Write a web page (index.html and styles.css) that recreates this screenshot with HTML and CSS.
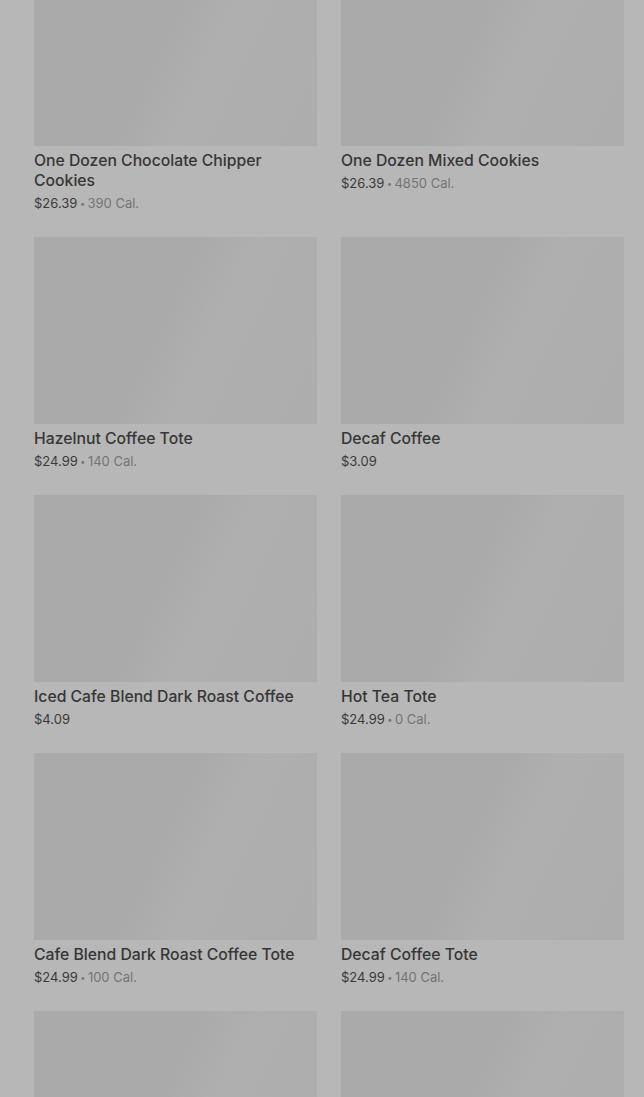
FILE: index.html
```html
<!DOCTYPE html>
<html lang="en">
<head>
<meta charset="utf-8">
<title>Menu</title>
<link rel="stylesheet" href="styles.css">
</head>
<body>
<main class="grid">
  <article class="card">
    <div class="thumb"></div>
    <h3 class="name">One Dozen Chocolate Chipper Cookies</h3>
    <p class="meta"><span class="price">$26.39</span><span class="cal"><span class="sep">•</span>390 Cal.</span></p>
  </article>
  <article class="card">
    <div class="thumb"></div>
    <h3 class="name">One Dozen Mixed Cookies</h3>
    <p class="meta"><span class="price">$26.39</span><span class="cal"><span class="sep">•</span>4850 Cal.</span></p>
  </article>
  <article class="card">
    <div class="thumb"></div>
    <h3 class="name">Hazelnut Coffee Tote</h3>
    <p class="meta"><span class="price">$24.99</span><span class="cal"><span class="sep">•</span>140 Cal.</span></p>
  </article>
  <article class="card">
    <div class="thumb"></div>
    <h3 class="name">Decaf Coffee</h3>
    <p class="meta"><span class="price">$3.09</span></p>
  </article>
  <article class="card">
    <div class="thumb"></div>
    <h3 class="name">Iced Cafe Blend Dark Roast Coffee</h3>
    <p class="meta"><span class="price">$4.09</span></p>
  </article>
  <article class="card">
    <div class="thumb"></div>
    <h3 class="name">Hot Tea Tote</h3>
    <p class="meta"><span class="price">$24.99</span><span class="cal"><span class="sep">•</span>0 Cal.</span></p>
  </article>
  <article class="card">
    <div class="thumb"></div>
    <h3 class="name">Cafe Blend Dark Roast Coffee Tote</h3>
    <p class="meta"><span class="price">$24.99</span><span class="cal"><span class="sep">•</span>100 Cal.</span></p>
  </article>
  <article class="card">
    <div class="thumb"></div>
    <h3 class="name">Decaf Coffee Tote</h3>
    <p class="meta"><span class="price">$24.99</span><span class="cal"><span class="sep">•</span>140 Cal.</span></p>
  </article>
  <article class="card">
    <div class="thumb"></div>
  </article>
  <article class="card">
    <div class="thumb"></div>
  </article>
</main>
</body>
</html>
```

FILE: styles.css
```css
html, body {
  margin: 0;
  padding: 0;
  background: #b7b7b7;
  overflow: hidden;
}

body {
  font-family: Inter, "Liberation Sans", sans-serif;
}

.grid {
  display: grid;
  grid-template-columns: 283px 283px;
  column-gap: 24px;
  padding: 0 20px 0 34px;
  margin-top: -41px;
  align-items: start;
}

.card {
  margin-bottom: 24px;
}

.thumb {
  height: 187px;
  background: linear-gradient(115deg, #aaaaaa 0%, #aaaaaa 45%, #afafaf 60%, #adadad 100%);
}

.name {
  margin: 5px 0 0;
  font-size: 15.75px;
  line-height: 20px;
  font-weight: 500;
  color: #363636;
}

.meta {
  margin: 2px 0 0;
  height: 20px;
  font-size: 13px;
  line-height: 20px;
  color: #3a3a3a;
}

.cal {
  color: #747474;
}

.sep {
  display: inline-block;
  font-size: 9px;
  line-height: 10px;
  margin: 0 2.5px;
  vertical-align: 1px;
}
```
